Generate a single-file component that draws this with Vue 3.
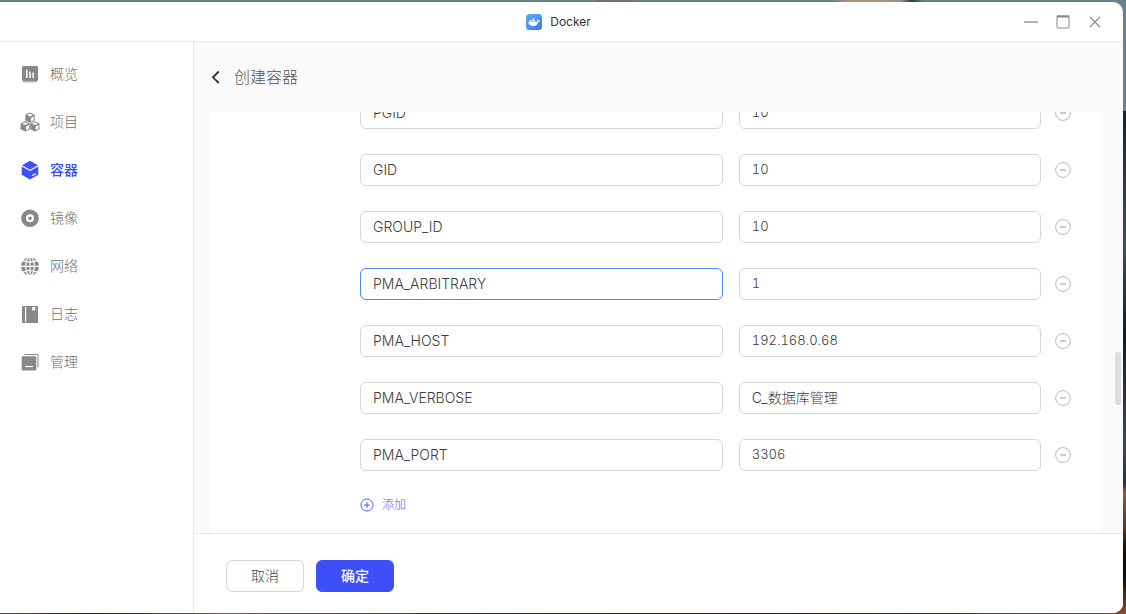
<script setup>
import { ref } from 'vue'

const menu = [
  { id: 'overview', label: '概览' },
  { id: 'project', label: '项目' },
  { id: 'container', label: '容器' },
  { id: 'image', label: '镜像' },
  { id: 'network', label: '网络' },
  { id: 'log', label: '日志' },
  { id: 'manage', label: '管理' },
]
const current = ref('container')

const variables = ref([
  { key: 'PGID', value: '10' },
  { key: 'GID', value: '10' },
  { key: 'GROUP_ID', value: '10' },
  { key: 'PMA_ARBITRARY', value: '1' },
  { key: 'PMA_HOST', value: '192.168.0.68' },
  { key: 'PMA_VERBOSE', value: 'C_数据库管理' },
  { key: 'PMA_PORT', value: '3306' },
])
const activeIndex = ref(3)

function isNumeric(value) {
  return /^[\d.]+$/.test(value)
}
function removeRow(index) {
  variables.value.splice(index, 1)
}
function addRow() {
  variables.value.push({ key: '', value: '' })
}
</script>

<template>
  <div class="desktop">
    <div class="window">
      <header class="titlebar">
        <div class="brand">
          <svg class="brand-icon" viewBox="0 0 16 16" aria-hidden="true">
            <defs>
              <linearGradient id="brand-fill" x1="0" y1="0" x2="1" y2="1">
                <stop offset="0" stop-color="#57b2fa" />
                <stop offset="1" stop-color="#3a72f5" />
              </linearGradient>
            </defs>
            <rect width="16" height="16" rx="3.5" fill="url(#brand-fill)" />
            <path fill="#fff" d="M2.3 7.800h7.900c.8 0 1.300-.3 1.400-.9-.4-.7-.3-1.300.2-1.900.6.4.8.9.8 1.400.5-.1 1 0 1.500.3-.3.7-.9 1-1.700 1-.9 2.800-2.500 4.300-5.200 4.300C4 12 2.300 10.500 2.300 7.800z" />
            <path fill="#fff" fill-opacity=".85" d="M3.500 6h1.700v1.500H3.500zM5.500 6h1.700v1.500H5.500zM7.500 6h1.700v1.500H7.500zM6.700 4.200h1.700v1.600H6.700z" />
          </svg>
          <span>Docker</span>
        </div>
        <div class="window-controls">
          <button type="button" aria-label="最小化">
            <svg viewBox="0 0 16 16"><path d="M1 8h14" stroke="#999" stroke-width="1.500" /></svg>
          </button>
          <button type="button" aria-label="最大化">
            <svg viewBox="0 0 16 16" fill="none" stroke="#888"><rect x="2" y="2" width="12" height="12" rx=".5" /><path d="M2 2.500h12" stroke-width="2" /></svg>
          </button>
          <button type="button" aria-label="关闭">
            <svg viewBox="0 0 16 16"><path d="M3 3l10 10M13 3L3 13" stroke="#888" stroke-width="1.100" /></svg>
          </button>
        </div>
      </header>

      <div class="body">
        <nav class="sidebar">
          <button
            v-for="item in menu"
            :key="item.id"
            type="button"
            class="menu-item"
            :class="{ active: current === item.id }"
            @click="current = item.id"
          >
            <svg class="menu-icon" viewBox="0 0 20 20" aria-hidden="true">
              <g v-if="item.id === 'overview'">
                <path d="M3 15.500h14v3H3z" fill="#bbb" />
                <rect x="2" y="2" width="16" height="15" rx="1.500" fill="currentColor" />
                <path d="M6.800 5.500v8.500M10 7.500v6.500M13.200 8.500v5.500" stroke="#fff" stroke-width="1.500" />
              </g>
              <g v-else-if="item.id === 'project'" stroke="#fff" stroke-width=".4">
                <g v-for="(p, i) in ['translate(10 5.7)', 'translate(5.2 14.3)', 'translate(14.8 14.3)']" :key="i" :transform="p">
                  <path d="M0-5.400L4.900-2.900V3L0 5.400-4.900 3V-2.900z" fill="currentColor" />
                  <path d="M0-4L3-2.600 0-1.200-3-2.600z" fill="#fff" stroke="none" />
                  <path d="M.8.200L3.700-1.200V2.200L.8 3.700z" fill="#fff" stroke="none" />
                </g>
              </g>
              <g v-else-if="item.id === 'container'">
                <path d="M10 .8L18 5.300 10 9.700 2 5.300z" fill="currentColor" />
                <path d="M1.700 6.500L10 11.100 18.300 6.500V14.800L10 19.400 1.700 14.800z" fill="currentColor" />
                <path d="M12 15.800L16 13.500" stroke="#fff" stroke-width="1.300" />
              </g>
              <g v-else-if="item.id === 'image'" fill="none">
                <circle cx="10" cy="10.300" r="6.400" stroke="currentColor" stroke-width="4.800" />
                <circle cx="10" cy="10.300" r="1.700" fill="currentColor" />
              </g>
              <g v-else-if="item.id === 'network'">
                <circle cx="10" cy="10.300" r="9" fill="currentColor" />
                <g fill="none" stroke="#fff" stroke-width="1.200">
                  <ellipse cx="10" cy="10.300" rx="4.300" ry="9.500" />
                  <path d="M10 0v20M0 10.300h20M2.500 4.400Q10 7.700 17.500 4.400M2.500 16.200Q10 12.800 17.500 16.200" />
                </g>
              </g>
              <g v-else-if="item.id === 'log'">
                <rect x="2" y="2" width="16" height="17" rx=".8" fill="currentColor" />
                <path d="M5.600 3v15" stroke="#fff" stroke-width="1.200" />
                <path d="M12.200 3h3v4l-1.500-1.200L12.200 7z" fill="#fff" />
              </g>
              <g v-else>
                <path d="M4.500 2.500H18V15.500" fill="none" stroke="currentColor" />
                <rect x="1.700" y="4.300" width="14.600" height="14.200" rx="1.200" fill="currentColor" />
                <path d="M5 14.500h8" stroke="#fff" stroke-width="1.200" />
              </g>
            </svg>
            <span>{{ item.label }}</span>
          </button>
        </nav>

        <main class="content">
          <div class="page-head">
            <button type="button" class="back" aria-label="返回">
              <svg viewBox="0 0 16 16" fill="none"><path d="M10.700 2.500L5 8.300l5.700 5.700" stroke="#333" stroke-width="1.800" /></svg>
            </button>
            <h1>创建容器</h1>
          </div>

          <div class="scroll-area">
            <form class="card" @submit.prevent>
              <div v-for="(row, i) in variables" :key="i" class="env-row">
                <div class="pair">
                  <input
                    v-model="row.key"
                    type="text"
                    aria-label="变量名"
                    :class="{ editing: activeIndex === i }"
                    @focus="activeIndex = i"
                  />
                  <input
                    v-model="row.value"
                    type="text"
                    aria-label="变量值"
                    :class="{ numeric: isNumeric(row.value) }"
                  />
                </div>
                <button type="button" class="remove" aria-label="删除" @click="removeRow(i)">
                  <svg viewBox="0 0 16 16" fill="none" stroke="#b8b8b8">
                    <circle cx="8" cy="8" r="7.400" />
                    <path d="M5 8h6" stroke-width="1.400" />
                  </svg>
                </button>
              </div>
              <button type="button" class="add" @click="addRow">
                <svg viewBox="0 0 14 14" fill="none" stroke="currentColor">
                  <circle cx="7" cy="7" r="6" />
                  <path d="M7 4v6M4 7h6" />
                </svg>
                <span>添加</span>
              </button>
            </form>
            <div class="scroll-thumb"></div>
          </div>

          <footer class="actions">
            <button type="button" class="btn">取消</button>
            <button type="button" class="btn primary">确定</button>
          </footer>
        </main>
      </div>
    </div>
  </div>
</template>

<style>
body {
  margin: 0;
}
</style>

<style scoped>
.desktop {
  box-sizing: border-box;
  height: 100vh;
  padding: 2px 3px 1px 0;
  overflow: hidden;
  font-family: Inter, "Noto Sans CJK SC", sans-serif;
  font-size: 14px;
  font-weight: 300;
  line-height: 20px;
  background:
    linear-gradient(90deg, transparent 53%, #76706a 53%, #76706a 56%, transparent 56%, transparent 74%, #a29080 75%, #a29080 79%, #8a9397 80%, #33393d 81%, transparent 82%) top / 100% 2px no-repeat,
    linear-gradient(90deg, #70452c, #2b2522 8%, #8c5432 20%, #3f2b20 45%, #241f1e 70%, #8c4c29) bottom / 100% 1px no-repeat,
    linear-gradient(#65838a 18%, #1b2326 18%, #3d5055 40%, #141d20 55%, #3a4a4f 72%, #2c3538 79%, #905a3a 80%, #5a3521 86%, #0d0a09 90%, #0d0a09 94%, #8c4c29);
}
button {
  padding: 0;
  border: 0;
  background: none;
  font: inherit;
  cursor: pointer;
}
svg {
  display: block;
}
.window {
  display: flex;
  flex-direction: column;
  height: 100%;
  overflow: hidden;
  background: #fff;
  border-radius: 0 10px 10px 0;
}
.titlebar {
  display: grid;
  grid-template-columns: 1fr auto 1fr;
  align-items: center;
  height: 39px;
  flex: none;
  border-bottom: 1px solid #eaeaea;
}
.brand {
  grid-column: 2;
  display: flex;
  align-items: center;
  gap: 8px;
  padding-right: 6px;
  color: #333;
  font-size: 12px;
  font-weight: 400;
}
.brand-icon {
  width: 16px;
  height: 16px;
}
.window-controls {
  display: flex;
  justify-content: flex-end;
  gap: 16px;
  padding-right: 20px;
}
.window-controls svg {
  width: 16px;
  height: 16px;
}
.body {
  display: flex;
  flex: 1;
  min-height: 0;
}
.sidebar {
  box-sizing: border-box;
  flex: none;
  width: 194px;
  padding-top: 8px;
  border-right: 1px solid #eaeaea;
}
.menu-item {
  display: flex;
  align-items: center;
  gap: 10px;
  width: 100%;
  height: 48px;
  padding-left: 20px;
  color: #888;
}
.menu-item span {
  color: #707070;
}
.menu-item.active,
.menu-item.active span {
  color: #3d4ff9;
  font-weight: 500;
}
.menu-icon {
  width: 20px;
  height: 20px;
}
.content {
  display: flex;
  flex: 1;
  flex-direction: column;
  min-width: 0;
  background: #fafafa;
}
.page-head {
  display: flex;
  flex: none;
  align-items: center;
  gap: 10px;
  height: 70px;
  padding-left: 14px;
}
.back svg {
  width: 16px;
  height: 16px;
}
h1 {
  margin: 0;
  color: #555;
  font-size: 16px;
  font-weight: 300;
}
.scroll-area {
  position: relative;
  display: flex;
  flex: 1;
  flex-direction: column;
  justify-content: flex-end;
  min-height: 0;
  padding: 0 22px 0 16px;
  overflow: hidden;
}
.card {
  display: flex;
  flex: none;
  flex-direction: column;
  gap: 25px;
  padding: 0 30px 19px 150px;
  background: #fff;
  border-radius: 6px;
}
.env-row {
  display: flex;
  align-items: center;
  gap: 14px;
}
.pair {
  display: grid;
  flex: 1;
  grid-template-columns: 6fr 5fr;
  gap: 16px;
}
.pair input {
  box-sizing: border-box;
  min-width: 0;
  height: 32px;
  padding: 0 12px 2px;
  border: 1px solid #d6d6d6;
  border-radius: 6px;
  outline: none;
  background: #fff;
  color: #3c3c3c;
  font: inherit;
}
.pair input.numeric {
  font-size: 13px;
  font-variant-numeric: tabular-nums;
}
.pair input.editing {
  border-color: #4a8af4;
}
.remove svg {
  width: 16px;
  height: 16px;
}
.add {
  display: flex;
  align-self: flex-start;
  align-items: center;
  gap: 8px;
  height: 18px;
  color: #5362fa;
  font-size: 12px;
}
.add svg {
  width: 14px;
  height: 14px;
}
.scroll-thumb {
  position: absolute;
  top: 57%;
  right: 2px;
  width: 6px;
  height: 53px;
  border-radius: 3px;
  background: #ddd;
}
.actions {
  display: flex;
  flex: none;
  gap: 12px;
  padding: 26px 32px 21px;
  border-top: 1px solid #eaeaea;
  background: #fff;
}
.btn {
  box-sizing: border-box;
  width: 78px;
  height: 32px;
  border: 1px solid #d6d6d6;
  border-radius: 6px;
  background: #fff;
  color: #444;
}
.btn.primary {
  border-color: #3d4ff9;
  background: #3d4ff9;
  color: #fff;
  font-weight: 500;
}
</style>
